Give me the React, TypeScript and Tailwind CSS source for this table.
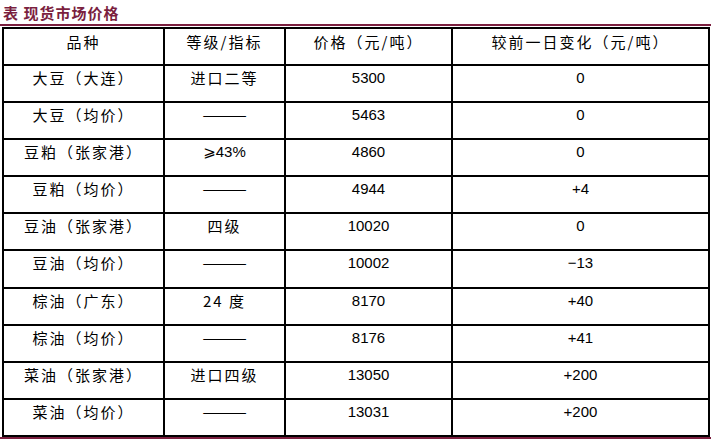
import React from 'react';

interface IPriceRow {
  name: string;
  grade: string;
  price: string;
  change: string;
}

const rows: IPriceRow[] = [
  { name: '大豆（大连）', grade: '进口二等', price: '5300', change: '0' },
  { name: '大豆（均价）', grade: '——', price: '5463', change: '0' },
  { name: '豆粕（张家港）', grade: '⩾43%', price: '4860', change: '0' },
  { name: '豆粕（均价）', grade: '——', price: '4944', change: '+4' },
  { name: '豆油（张家港）', grade: '四级', price: '10020', change: '0' },
  { name: '豆油（均价）', grade: '——', price: '10002', change: '−13' },
  { name: '棕油（广东）', grade: '24 度', price: '8170', change: '+40' },
  { name: '棕油（均价）', grade: '——', price: '8176', change: '+41' },
  { name: '菜油（张家港）', grade: '进口四级', price: '13050', change: '+200' },
  { name: '菜油（均价）', grade: '——', price: '13031', change: '+200' },
];

const headers = ['品种', '等级/指标', '价格（元/吨）', '较前一日变化（元/吨）'];

const cjk = "font-['Noto_Sans_CJK_SC',sans-serif] text-[15px] tracking-[2px]";
const num = "font-['Liberation_Sans','DejaVu_Sans','Noto_Sans_CJK_SC',sans-serif] text-[15px]";
const cell = 'bg-white text-center leading-[20px] text-black';

const GradeCell: React.FC<{ grade: string }> = ({ grade }) => {
  if (grade === '——') {
    return (
      <div className={`${cell} pt-[2px]`}>
        <span className="inline-block font-['Noto_Sans_CJK_SC',sans-serif] text-[15px] scale-x-[1.8]">
          ——
        </span>
      </div>
    );
  }
  const isNum = grade.startsWith('⩾');
  return <div className={`${cell} pt-[2px] ${isNum ? num : cjk}`}>{grade}</div>;
};

const App: React.FC = () => {
  return (
    <div className="w-[711px] h-[439px] bg-white overflow-hidden">
      <div className="h-[24px] pl-[3px] flex items-center">
        <span className="font-['Noto_Sans_CJK_SC',sans-serif] font-bold text-[15px] tracking-[1px] leading-none text-[#7b1f3f]">
          表&nbsp;现货市场价格
        </span>
      </div>
      <div className="h-[2px] bg-[#7b1f3f]" />
      <div className="h-[1px]" />
      <div className="ml-[2px] w-[708px] grid grid-cols-[159px_119px_165px_255px] grid-rows-[35px_repeat(10,35.1px)] gap-[2px] p-[2px] bg-black">
        {headers.map((h) => (
          <div key={h} className={`${cell} pt-[3px] ${cjk}`}>
            {h}
          </div>
        ))}
        {rows.map((r) => (
          <React.Fragment key={r.name}>
            <div className={`${cell} pt-[2px] ${cjk}`}>{r.name}</div>
            <GradeCell grade={r.grade} />
            <div className={`${cell} pt-[2px] ${num}`}>{r.price}</div>
            <div className={`${cell} pt-[2px] ${num}`}>{r.change}</div>
          </React.Fragment>
        ))}
      </div>
      <div className="h-[2px] bg-[#7b1f3f]" />
    </div>
  );
};

export default App;
